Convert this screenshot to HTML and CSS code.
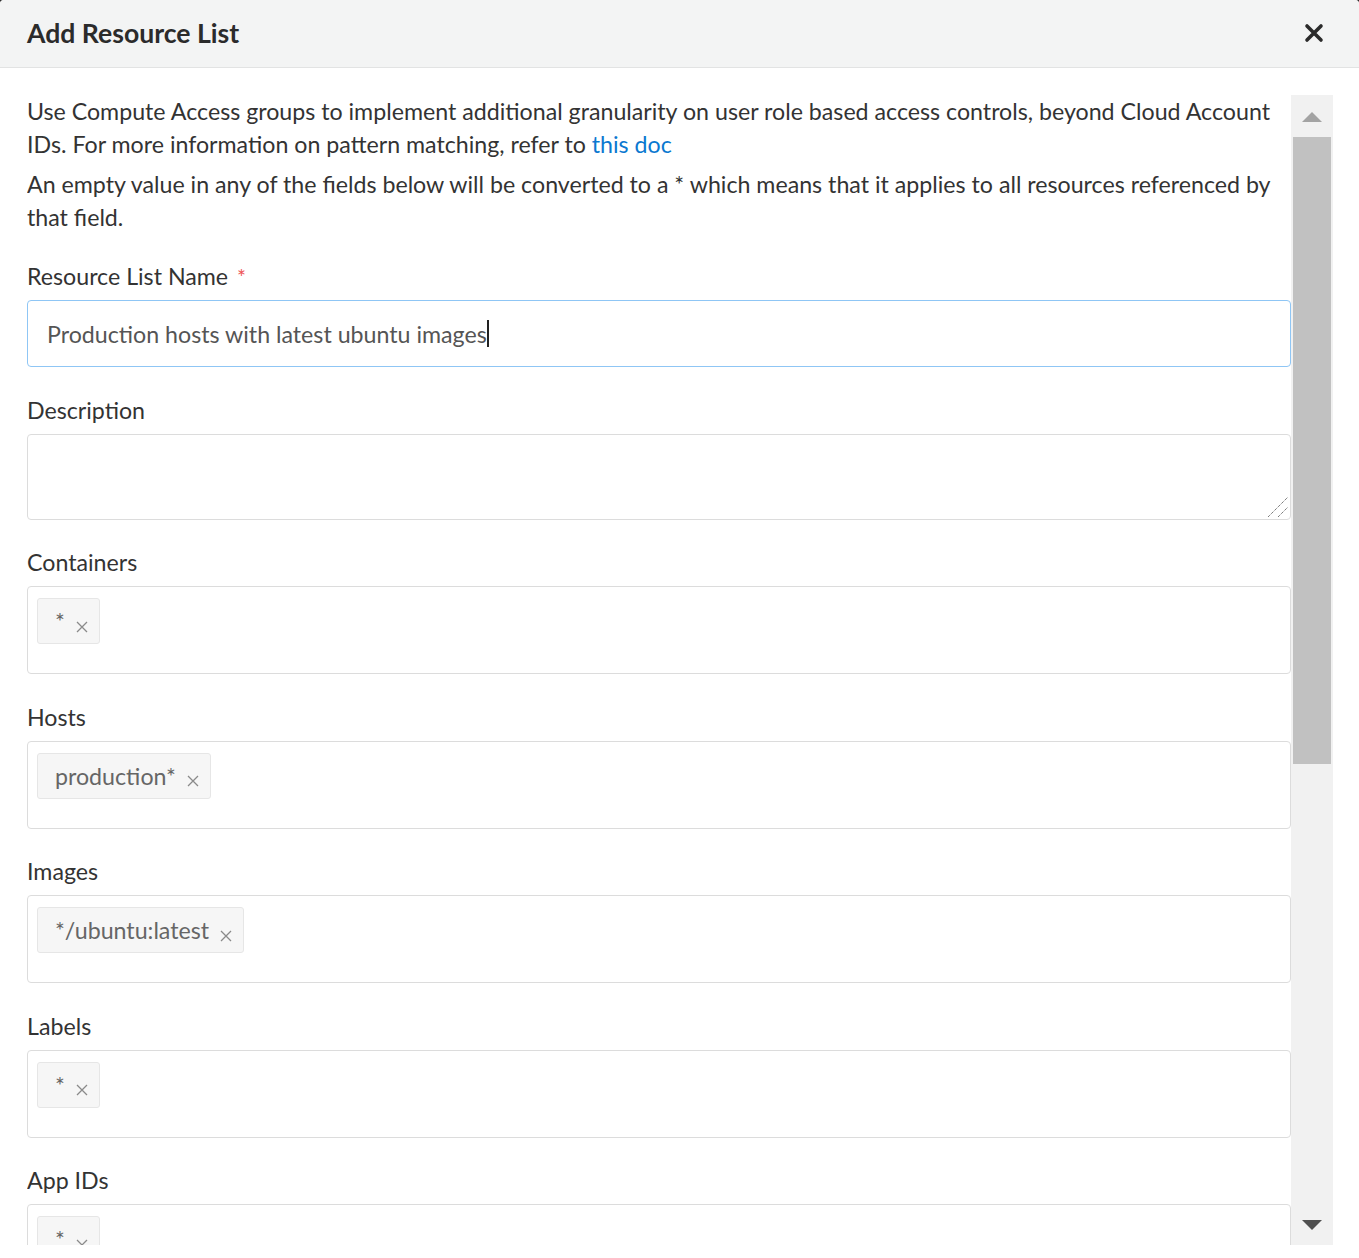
FILE: index.html
```html
<!DOCTYPE html>
<html lang="en">
<head>
<meta charset="utf-8">
<title>Add Resource List</title>
<link rel="stylesheet" href="styles.css">
</head>
<body>
<div class="modal">
  <header class="modal-header">
    <h1 class="modal-title">Add Resource List</h1>
    <button class="close-btn" aria-label="Close">
      <svg width="20" height="20" viewBox="0 0 20 20"><path d="M3 3 L17 17 M17 3 L3 17" stroke="#2b2b2b" stroke-width="3.6" stroke-linecap="round"/></svg>
    </button>
  </header>
  <div class="modal-body">
    <div class="content">
      <p class="intro">Use Compute Access groups to implement additional granularity on user role based access controls, beyond Cloud Account IDs. For more information on pattern matching, refer to <a href="#" class="link">this doc</a></p>
      <p class="intro">An empty value in any of the fields below will be converted to a * which means that it applies to all resources referenced by that field.</p>

      <div class="field">
        <label class="label">Resource List Name <span class="req">*</span></label>
        <div class="input focused">Production hosts with latest ubuntu images<span class="caret"></span></div>
      </div>

      <div class="field">
        <label class="label">Description</label>
        <div class="textarea-wrap">
          <textarea class="textarea"></textarea>
          <svg class="resizer" width="22" height="22" viewBox="0 0 22 22"><path d="M1 21 L21 1 M11 21 L21 11" stroke="#444" stroke-width="1" stroke-dasharray="1 1"/></svg>
        </div>
      </div>

      <div class="field">
        <label class="label">Containers</label>
        <div class="tags"><span class="tag">*<svg class="tag-x" width="12" height="12" viewBox="0 0 12 12"><path d="M1 1 L11 11 M11 1 L1 11" stroke="#8a8a8a" stroke-width="1.3"/></svg></span></div>
      </div>

      <div class="field">
        <label class="label">Hosts</label>
        <div class="tags"><span class="tag">production*<svg class="tag-x" width="12" height="12" viewBox="0 0 12 12"><path d="M1 1 L11 11 M11 1 L1 11" stroke="#8a8a8a" stroke-width="1.3"/></svg></span></div>
      </div>

      <div class="field">
        <label class="label">Images</label>
        <div class="tags"><span class="tag">*/ubuntu:latest<svg class="tag-x" width="12" height="12" viewBox="0 0 12 12"><path d="M1 1 L11 11 M11 1 L1 11" stroke="#8a8a8a" stroke-width="1.3"/></svg></span></div>
      </div>

      <div class="field">
        <label class="label">Labels</label>
        <div class="tags"><span class="tag">*<svg class="tag-x" width="12" height="12" viewBox="0 0 12 12"><path d="M1 1 L11 11 M11 1 L1 11" stroke="#8a8a8a" stroke-width="1.3"/></svg></span></div>
      </div>

      <div class="field">
        <label class="label">App IDs</label>
        <div class="tags"><span class="tag">*<svg class="tag-x" width="12" height="12" viewBox="0 0 12 12"><path d="M1 1 L11 11 M11 1 L1 11" stroke="#8a8a8a" stroke-width="1.3"/></svg></span></div>
      </div>
    </div>
    <div class="scrollbar" aria-hidden="true">
      <div class="sb-btn"><span class="tri-up"></span></div>
      <div class="sb-track"><div class="sb-thumb"></div></div>
      <div class="sb-btn"><span class="tri-down"></span></div>
    </div>
  </div>
</div>
</body>
</html>
```
FILE: styles.css
```css
* { box-sizing: border-box; }
html, body { margin: 0; padding: 0; }
body {
  background: #2f2f2f;
  font-family: Lato, "Open Sans", "Liberation Sans", sans-serif;
  color: #333;
  width: 1359px;
  height: 1258px;
  overflow: hidden;
}
.modal {
  background: #fff;
  height: 1258px;
  border-radius: 4px 4px 0 0;
  overflow: hidden;
}
.modal-header {
  height: 68px;
  background: #f3f4f4;
  border-bottom: 1px solid #e2e3e3;
  display: flex;
  align-items: center;
  justify-content: space-between;
  padding: 0 35px 0 27px;
}
.modal-title {
  margin: 0;
  font-size: 26.6px;
  font-weight: 700;
  color: #2b2b2b;
  line-height: 1;
  padding-bottom: 1px;
}
.close-btn {
  border: 0;
  background: none;
  padding: 0;
  display: flex;
  margin-bottom: 2px;
}
.modal-body {
  display: flex;
  height: 1177px;
  padding: 27px 26px 0 27px;
}
.content {
  flex: 1;
  overflow: hidden;
  min-width: 0;
}
.intro {
  margin: 0 0 7px;
  font-size: 23.2px;
  line-height: 33px;
  color: #333;
}
.link { color: #0b78d0; text-decoration: none; }
.field { margin-top: 26.5px; }
.intro + .field { margin-top: 26px; }
.label {
  display: block;
  font-size: 23.2px;
  line-height: 33px;
  color: #333;
  margin-bottom: 7px;
}
.req {
  color: #ee5555;
  font-size: 21px;
  margin-left: 3px;
}
.input {
  height: 67px;
  border: 1px solid #8fc6f5;
  border-radius: 4px;
  padding: 0 19px;
  display: flex;
  align-items: center;
  font-size: 23.2px;
  color: #555;
}
.caret {
  display: inline-block;
  width: 2px;
  height: 27px;
  background: #222;
}
.textarea-wrap { position: relative; }
.textarea {
  display: block;
  width: 100%;
  height: 86px;
  border: 1px solid #dcdcdc;
  border-radius: 4px;
  font-family: inherit;
  font-size: 23.2px;
  padding: 10px 19px;
  resize: none;
  margin: 0;
}
.resizer {
  position: absolute;
  right: 2px;
  bottom: 2px;
}
.tags {
  height: 88px;
  border: 1px solid #dcdcdc;
  border-radius: 4px;
  padding: 11px 9px;
}
.tag {
  display: inline-flex;
  align-items: center;
  height: 46px;
  padding: 0 11px 0 17px;
  background: #f6f6f6;
  border: 1px solid #e6e6e6;
  border-radius: 3px;
  font-size: 23.2px;
  color: #666;
  gap: 11px;
}
.tag-x { margin-top: 11px; flex: none; }
.scrollbar {
  width: 42px;
  flex: none;
  background: #f1f1f1;
  display: flex;
  flex-direction: column;
}
.sb-btn {
  height: 42px;
  flex: none;
  display: flex;
  align-items: center;
  justify-content: center;
}
.tri-up {
  width: 0; height: 0;
  border-left: 10px solid transparent;
  border-right: 10px solid transparent;
  border-bottom: 10px solid #a3a3a3;
  margin-top: 1px;
}
.tri-down {
  width: 0; height: 0;
  border-left: 10px solid transparent;
  border-right: 10px solid transparent;
  border-top: 10px solid #505050;
  margin-top: 1px;
}
.sb-track { flex: 1; padding: 0 2px; }
.sb-thumb { height: 627px; background: #c1c1c1; }
```
